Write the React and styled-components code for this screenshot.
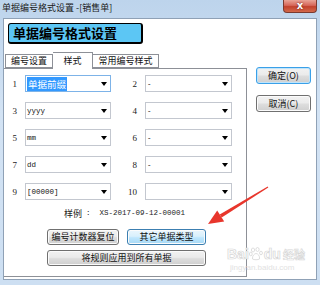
import React from 'react';
import styled, { createGlobalStyle } from 'styled-components';

const GlobalStyle = createGlobalStyle`
  html, body {
    margin: 0;
    padding: 0;
  }
  body {
    width: 320px;
    height: 285px;
    overflow: hidden;
    font-family: "Noto Sans CJK SC", sans-serif;
  }
`;

const Window = styled.div`
  position: relative;
  box-sizing: border-box;
  width: 320px;
  height: 285px;
  padding: 0 3px 5px 3px;
  display: flex;
  flex-direction: column;
  background: linear-gradient(180deg, #bdd4ec 0%, #d3e3f4 40%, #cddff2 100%);
`;

const TitleBar = styled.div`
  height: 18px;
  display: flex;
  align-items: flex-start;
`;

const Title = styled.span`
  margin: 2px 0 0 -1px;
  font-size: 9px;
  line-height: 12px;
  color: #1b1b1b;
  white-space: pre;
`;

const CloseButton = styled.div`
  margin-left: auto;
  box-sizing: border-box;
  width: 34px;
  height: 13px;
  border: 1px solid #7a3a30;
  border-top: none;
  border-radius: 0 0 4px 4px;
  background: linear-gradient(180deg, #e9a497 0%, #d6675a 45%, #c2412d 55%, #d36a4c 100%);
  display: flex;
  align-items: center;
  justify-content: center;
  color: #fff;
  font: bold 10px "DejaVu Sans", sans-serif;
  line-height: 10px;
  text-shadow: 0 0 2px #5a1a10;
`;

const Client = styled.div`
  flex: 1;
  display: flex;
  flex-direction: column;
  background: #fff;
  border: 1px solid #8fa1b6;
`;

const HeaderLabel = styled.div`
  box-sizing: border-box;
  margin: 4px 0 0 4px;
  width: 135px;
  height: 21px;
  padding-left: 4px;
  border: 1px solid #000;
  border-right-width: 2px;
  border-bottom-width: 2px;
  border-radius: 3px;
  background: #5cc6f4;
  font-size: 13px;
  font-weight: bold;
  line-height: 18px;
  color: #000;
`;

const Body = styled.div`
  flex: 1;
  display: flex;
  margin: 8px 0 2px 0;
`;

const LeftColumn = styled.div`
  width: 243px;
  display: flex;
  flex-direction: column;
`;

const TabStrip = styled.div`
  height: 16px;
  display: flex;
  align-items: flex-end;
  padding-left: 1px;
`;

const Tab = styled.div`
  position: relative;
  box-sizing: border-box;
  width: ${p => p.$w}px;
  height: ${p => (p.$active ? 17 : 14)}px;
  margin-bottom: ${p => (p.$active ? -1 : 0)}px;
  border: 1px solid #8d9097;
  border-bottom: ${p => (p.$active ? 'none' : '1px solid #8d9097')};
  border-left: ${p => (p.$noLeft ? 'none' : '1px solid #8d9097')};
  background: #fff;
  z-index: ${p => (p.$active ? 2 : 1)};
  font-size: 9px;
  line-height: ${p => (p.$active ? 16 : 12)}px;
  text-align: center;
  color: #111;
`;

const Panel = styled.div`
  flex: 1;
  display: flex;
  flex-direction: column;
  border: 1px solid #8d9097;
  border-left: none;
  padding-top: 6px;
`;

const FieldRow = styled.div`
  display: flex;
  align-items: center;
  height: 17px;
  margin-bottom: 10px;
`;

const FieldLabel = styled.span`
  width: ${p => p.$w}px;
  margin-right: 8px;
  text-align: right;
  font: 9px "Liberation Serif", serif;
  color: #222;
`;

const Select = styled.div`
  box-sizing: border-box;
  width: ${p => p.$w}px;
  height: 17px;
  display: flex;
  align-items: center;
  padding: 0 3px 0 1px;
  border: 1px solid ${p => (p.$focus ? '#7db3e8' : '#c3c7cf')};
  background: #fff;
`;

const Value = styled.span`
  flex: 1;
  font: 7.5px "Liberation Mono", monospace;
  color: #111;
  white-space: pre;
`;

const Highlight = styled.span`
  background: #3399ff;
  color: #fff;
  font: 9.5px "Noto Sans CJK SC", sans-serif;
  line-height: 12px;
  padding: 0 1px;
`;

const Arrow = styled.span`
  width: 0;
  height: 0;
  border-left: 3px solid transparent;
  border-right: 3px solid transparent;
  border-top: 4px solid #000;
`;

const SampleLine = styled.div`
  display: flex;
  align-items: center;
  height: 12px;
  margin: -3px 0 0 60px;
  color: #222;
`;

const SampleTitle = styled.span`
  font-size: 9px;
  margin-right: 4px;
`;

const SampleValue = styled.span`
  font: 7.5px "Liberation Mono", monospace;
  white-space: pre;
`;

const ButtonGroup = styled.div`
  display: flex;
  flex-direction: column;
  gap: 5px;
  margin: 10px 0 0 43px;
`;

const ButtonRow = styled.div`
  display: flex;
  gap: 8px;
`;

const Button = styled.div`
  box-sizing: border-box;
  width: ${p => p.$w}px;
  height: ${p => p.$h || 16}px;
  border: 1px solid ${p => (p.$hot ? '#3c7fb1' : p.$default ? '#3aa0e8' : '#707070')};
  border-radius: 3px;
  background: ${p =>
    p.$hot
      ? 'linear-gradient(180deg, #eaf6fd 0%, #d9f0fc 45%, #bee6fd 55%, #a7d9f5 100%)'
      : 'linear-gradient(180deg, #f2f2f2 0%, #ebebeb 45%, #dddddd 55%, #cfcfcf 100%)'};
  box-shadow: ${p => (p.$default ? 'inset 0 0 0 1px #bfe4fb' : 'inset 0 0 0 1px #fbfbfb')};
  font-size: 9px;
  line-height: ${p => (p.$h || 16) - 2}px;
  text-align: center;
  color: #111;
  white-space: pre;
`;

const RightColumn = styled.div`
  display: flex;
  flex-direction: column;
  gap: 11px;
  margin-left: 9px;
  padding-top: 15px;
`;

const Overlay = styled.svg`
  position: absolute;
  left: 0;
  top: 0;
  pointer-events: none;
`;

const Watermark = styled.div`
  position: absolute;
  left: 227px;
  top: 246px;
  display: flex;
  flex-direction: column;
  align-items: flex-start;
  pointer-events: none;
`;

const MarkRow = styled.div`
  display: flex;
  align-items: center;
`;

const MarkWord = styled.span`
  font: bold 14px "Liberation Sans", sans-serif;
  color: #fff;
  -webkit-text-stroke: 0.7px #d6d6d6;
`;

const MarkCn = styled.span`
  margin-left: 2px;
  font-size: 11px;
  font-weight: bold;
  color: #fff;
  -webkit-text-stroke: 0.6px #d6d6d6;
`;

const MarkUrl = styled.span`
  margin: 1px 0 0 3px;
  font: 8px "Liberation Sans", sans-serif;
  color: #e2e2e2;
`;

const rows = [
  [{ n: '1', v: '单据前缀', sel: true }, { n: '2', v: '-' }],
  [{ n: '3', v: 'yyyy' }, { n: '4', v: '-' }],
  [{ n: '5', v: 'mm' }, { n: '6', v: '-' }],
  [{ n: '7', v: 'dd' }, { n: '8', v: '-' }],
  [{ n: '9', v: '[00000]' }, { n: '10', v: '' }],
];

const Field = ({ item, labelWidth, selectWidth }) => (
  <>
    <FieldLabel $w={labelWidth}>{item.n}</FieldLabel>
    <Select $w={selectWidth} $focus={item.sel}>
      <Value>{item.sel ? <Highlight>{item.v}</Highlight> : item.v}</Value>
      <Arrow />
    </Select>
  </>
);

const Paw = () => (
  <svg width="15" height="14" viewBox="0 0 15 14">
    <g fill="#fff" stroke="#d6d6d6" strokeWidth="0.8">
      <ellipse cx="4" cy="3" rx="1.6" ry="2" />
      <ellipse cx="8.5" cy="2.5" rx="1.6" ry="2" />
      <ellipse cx="1.8" cy="7" rx="1.4" ry="1.8" />
      <ellipse cx="12" cy="6" rx="1.4" ry="1.8" />
      <path d="M3.5 12 C3 9 5.5 6.5 7 6.5 C9 6.5 11 9 10.5 12 C9 13 5 13 3.5 12 Z" />
    </g>
  </svg>
);

const App = () => (
  <Window>
    <GlobalStyle />
    <TitleBar>
      <Title>单据编号格式设置 -[销售单]</Title>
      <CloseButton>x</CloseButton>
    </TitleBar>
    <Client>
      <HeaderLabel>单据编号格式设置</HeaderLabel>
      <Body>
        <LeftColumn>
          <TabStrip>
            <Tab $w={48}>编号设置</Tab>
            <Tab $w={40} $active $noLeft>样式</Tab>
            <Tab $w={66} $noLeft>常用编号样式</Tab>
          </TabStrip>
          <Panel>
            {rows.map(([left, right]) => (
              <FieldRow key={left.n}>
                <Field item={left} labelWidth={13} selectWidth={86} />
                <Field item={right} labelWidth={26} selectWidth={87} />
              </FieldRow>
            ))}
            <SampleLine>
              <SampleTitle>样例</SampleTitle>
              <SampleValue>:  XS-2017-09-12-00001</SampleValue>
            </SampleLine>
            <ButtonGroup>
              <ButtonRow>
                <Button $w={72}>编号计数器复位</Button>
                <Button $w={79} $hot>其它单据类型</Button>
              </ButtonRow>
              <Button $w={159}>将规则应用到所有单据</Button>
            </ButtonGroup>
          </Panel>
        </LeftColumn>
        <RightColumn>
          <Button $w={55} $h={17} $default>确定(O)</Button>
          <Button $w={55} $h={17}>取消(C)</Button>
        </RightColumn>
      </Body>
    </Client>

    <Watermark>
      <MarkRow>
        <MarkWord>Bai</MarkWord>
        <Paw />
        <MarkWord>du</MarkWord>
        <MarkCn>经验</MarkCn>
      </MarkRow>
      <MarkUrl>jingyan.baidu.com</MarkUrl>
    </Watermark>

    <Overlay width="320" height="285" viewBox="0 0 320 285">
      <polygon
        fill="#e8362c"
        points="268.3,187.5 267.7,186.5 219.7,214.5 221.7,217.5"
      />
      <polygon fill="#e8362c" points="208,224 217.2,210.5 224.2,221.5" />
    </Overlay>
  </Window>
);

export default App;
